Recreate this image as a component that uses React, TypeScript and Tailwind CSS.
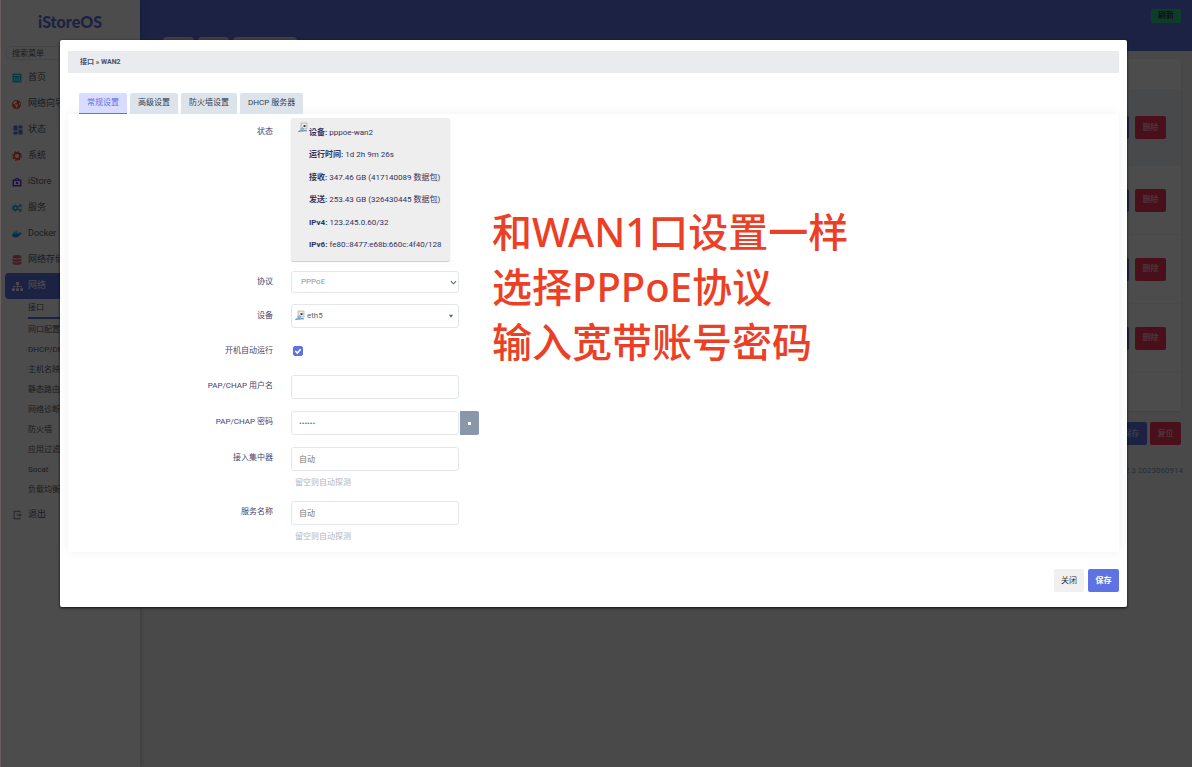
import clsx from "clsx";
import { useId, useState, type ReactNode } from "react";
import { FaCogs, FaDatabase, FaDocker, FaSitemap } from "react-icons/fa";
import { FaEarthAmericas } from "react-icons/fa6";
import { MdDashboard } from "react-icons/md";
import { RiLogoutBoxRLine } from "react-icons/ri";

const SUB_MENU = [
  "接口",
  "网口配置",
  "DHCP/DNS",
  "主机名映射",
  "静态路由",
  "网络诊断",
  "防火墙",
  "应用过滤",
  "Socat",
  "负载均衡",
];

const TABS = ["常规设置", "高级设置", "防火墙设置", "DHCP 服务器"];

const STATUS = [
  ["设备", "pppoe-wan2"],
  ["运行时间", "1d 2h 9m 26s"],
  ["接收", "347.46 GB (417140089 数据包)"],
  ["发送", "253.43 GB (326430445 数据包)"],
  ["IPv4", "123.245.0.60/32"],
  ["IPv6", "fe80::8477:e68b:660c:4f40/128"],
];

function ChartIcon() {
  return (
    <svg viewBox="0 0 20 20" className="size-[10px]" aria-hidden>
      <rect x="1" y="1" width="18" height="18" rx="1" fill="#11cdef" />
      <path
        d="M4 5h12M5.5 8v8M10 10v6M14.5 8v8"
        stroke="#fff"
        strokeWidth="1.6"
        fill="none"
      />
    </svg>
  );
}

function GearIcon() {
  return (
    <svg viewBox="0 0 20 20" className="size-[10px]" fill="none" aria-hidden>
      <circle cx="10" cy="10" r="6" stroke="#fb4b26" strokeWidth="3.6" />
      <circle
        cx="10"
        cy="10"
        r="8.6"
        stroke="#fb4b26"
        strokeWidth="2.4"
        strokeDasharray="3.6 3.15"
      />
    </svg>
  );
}

function BagIcon() {
  return (
    <svg viewBox="0 0 20 20" className="size-[10px]" fill="none" aria-hidden>
      <path d="M7 6V3h6v3" stroke="#6a3fe0" strokeWidth="2" />
      <rect x="2.5" y="6.5" width="15" height="11" stroke="#6a3fe0" strokeWidth="3" />
      <circle cx="10" cy="12" r="2.6" fill="#6a3fe0" />
    </svg>
  );
}

function EthernetIcon({ className }: { className?: string }) {
  return (
    <svg viewBox="0 0 20 22" className={clsx("h-[11px] w-[10px]", className)} aria-hidden>
      <path d="M6 2h12v12H6z" fill="#e9e6dc" stroke="#a9aaa6" strokeWidth="1.4" />
      <path d="M10 5h5v5h-5z" fill="#fff" />
      <path d="M11 6h4v4h-4z" fill="#3c3c3c" />
      <path d="M5 14l4-3 3 3-4 4z" fill="#9ab8d6" stroke="#6f94b8" />
      <path d="M1 20c3-4 6-1 9-2s4-1 8 0" fill="none" stroke="#4f8fcb" strokeWidth="2.4" />
    </svg>
  );
}

const MENU: { label: string; icon: ReactNode }[] = [
  { label: "首页", icon: <ChartIcon /> },
  { label: "网络向导", icon: <FaEarthAmericas className="size-[9px] text-[#fb4b26]" /> },
  { label: "状态", icon: <MdDashboard className="size-3 text-[#5e72e4]" /> },
  { label: "系统", icon: <GearIcon /> },
  { label: "iStore", icon: <BagIcon /> },
  { label: "服务", icon: <FaCogs className="size-[10px] text-[#11b5d8]" /> },
  { label: "Docker", icon: <FaDocker className="size-[10px] text-[#1a9be8]" /> },
  { label: "网络存储", icon: <FaDatabase className="size-[10px] text-[#e8607f]" /> },
  { label: "网络", icon: <FaSitemap className="size-[11px] text-white" /> },
];

function Sidebar() {
  return (
    <aside className="relative z-10 w-[140px] shrink-0 bg-white px-[5px] text-[#5c6070] shadow-[0_0_6px_rgba(0,0,0,0.25)]">
      <h1 className="pt-2 text-center font-['Lato','Noto_Sans_CJK_SC',sans-serif] text-[16px] leading-7 font-black text-[#5e72e4]">
        iStoreOS
      </h1>
      <input
        type="text"
        aria-label="搜索菜单"
        placeholder="搜索菜单"
        className="mt-[10px] block h-[14px] w-full rounded-full border border-gray-200 px-1.5 text-[8px] placeholder:text-[#5c6070]"
      />
      <nav className="mt-[5px] text-[9px]">
        {MENU.map((item) => (
          <a
            key={item.label}
            href="#"
            className={clsx(
              "flex h-[26px] items-center rounded pl-[7px]",
              item.label === "网络" && "bg-[#5e72e4] text-white",
            )}
          >
            <span className="flex w-4 items-center">{item.icon}</span>
            {item.label}
          </a>
        ))}
        <div className="pl-[23px] text-[8px]">
          {SUB_MENU.map((label, i) => (
            <a
              key={label}
              href="#"
              className={clsx(
                "flex h-5 items-center",
                i === 0 && "mr-5 mb-px border-b-2 border-[#5e72e4]",
              )}
            >
              {label}
            </a>
          ))}
        </div>
        <a href="#" className="mt-0.5 flex h-[26px] items-center pl-[7px]">
          <span className="flex w-4 items-center">
            <RiLogoutBoxRLine className="size-[10px] text-gray-500" />
          </span>
          退出
        </a>
      </nav>
    </aside>
  );
}

function ActionButton({ tone, children }: { tone: "red" | "blue"; children: ReactNode }) {
  return (
    <button
      type="button"
      className={clsx(
        "h-[23px] w-[31px] rounded-xs text-[8px] text-white/80",
        tone === "red" ? "bg-[#f5365c]" : "bg-[#5e72e4]",
      )}
    >
      {children}
    </button>
  );
}

function Background() {
  return (
    <div className="flex min-h-screen">
      <Sidebar />
      <div className="min-w-0 flex-1 bg-[#f4f5f7]">
        <header className="h-[51px] bg-[#5e72e4] pt-[9px] pr-[11px]">
          <button
            type="button"
            className="ml-auto block h-[14px] w-[30px] rounded-xs bg-[#2dce89] text-[8px] font-bold text-[#32325d]"
          >
            刷新
          </button>
          <div className="mt-3.5 flex gap-1 pl-[23px]">
            <span className="h-3.5 w-[31px] rounded-t bg-gray-300" />
            <span className="h-3.5 w-[31px] rounded-t bg-gray-300" />
            <span className="h-3.5 w-16 rounded-t bg-gray-300" />
          </div>
        </header>
        <main className="px-[11px] pt-2">
          <section className="rounded bg-white shadow-sm">
            <div className="h-[30px]" />
            <div className="flex h-[77px] items-center justify-end gap-1.5 bg-[#f2f6fa] pr-[15px]">
              <ActionButton tone="blue">编辑</ActionButton>
              <ActionButton tone="red">删除</ActionButton>
            </div>
            {[0, 1, 2].map((row) => (
              <div
                key={row}
                className="flex h-[69px] items-center justify-end gap-1.5 border-b border-gray-100 pr-[15px]"
              >
                <ActionButton tone="blue">编辑</ActionButton>
                <ActionButton tone="red">删除</ActionButton>
              </div>
            ))}
            <div className="h-[38px]" />
          </section>
          <div className="mt-[11px] flex justify-end gap-[3px]">
            <ActionButton tone="blue">保存</ActionButton>
            <ActionButton tone="red">复位</ActionButton>
          </div>
          <p className="mt-5 -mr-0.5 text-right text-[8px] leading-3 text-[#8898aa]">
            02.3 2023060914
          </p>
        </main>
      </div>
    </div>
  );
}

const FIELD =
  "block w-[168px] rounded-[3px] border border-[#e3e6ea] bg-white text-[8px] outline-none";

function Row({
  label,
  htmlFor,
  labelClass = "leading-6",
  className,
  children,
}: {
  label: string;
  htmlFor?: string;
  labelClass?: string;
  className?: string;
  children: ReactNode;
}) {
  return (
    <div className={clsx("flex items-start gap-[18px]", className)}>
      <label htmlFor={htmlFor} className={clsx("w-[205px] shrink-0 text-right", labelClass)}>
        {label}
      </label>
      <div>{children}</div>
    </div>
  );
}

function InterfaceForm() {
  const id = useId();
  const [autostart, setAutostart] = useState(true);

  return (
    <form className="pt-1 pb-[7px] text-[8px] text-[#45456b]">
      <Row label="状态" labelClass="leading-7">
        <div className="flex h-[143px] w-[159px] gap-px rounded-xs bg-[#eee] pt-1 pb-[5px] pl-[7px] text-[#32325d] shadow-[0_1px_1px_rgba(0,0,0,0.2)]">
          <EthernetIcon className="shrink-0" />
          <dl className="flex flex-col justify-between whitespace-nowrap">
            {STATUS.map(([name, value]) => (
              <div key={name} className="flex gap-0.5 leading-[22px]">
                <dt className="font-bold">{name}:</dt>
                <dd>{value}</dd>
              </div>
            ))}
          </dl>
        </div>
      </Row>

      <Row label="协议" htmlFor={`${id}-proto`} labelClass="leading-[22px]" className="mt-[10px]">
        <div className="relative">
          <select
            id={`${id}-proto`}
            className={clsx(FIELD, "h-[22px] appearance-none pl-[9px] text-[#8898aa]")}
          >
            <option>PPPoE</option>
          </select>
          <svg
            viewBox="0 0 8 8"
            className="pointer-events-none absolute top-2 right-0.5 size-[7px]"
            fill="none"
            aria-hidden
          >
            <path d="M1 2.5l3 3 3-3" stroke="#525f7f" strokeWidth="1.2" />
          </svg>
        </div>
      </Row>

      <Row label="设备" htmlFor={`${id}-device`} className="mt-[11px]">
        <div className="relative">
          <EthernetIcon className="absolute top-1.5 left-1" />
          <select
            id={`${id}-device`}
            className={clsx(FIELD, "h-6 appearance-none pl-[15px] text-[#5f6670]")}
          >
            <option>eth5</option>
          </select>
          <svg
            viewBox="0 0 6 6"
            className="pointer-events-none absolute top-[10px] right-1.5 size-1"
            aria-hidden
          >
            <path d="M0 1h6L3 5.5z" fill="#525f7f" />
          </svg>
        </div>
      </Row>

      <Row label="开机自动运行" htmlFor={`${id}-auto`} className="mt-[11px]">
        <div className="relative mt-[7px] ml-0.5 size-[10px]">
          <input
            id={`${id}-auto`}
            type="checkbox"
            checked={autostart}
            onChange={(e) => setAutostart(e.target.checked)}
            className="block size-[10px] appearance-none rounded-xs border border-[#5e72e4] checked:bg-[#5e72e4]"
          />
          {autostart ? (
            <svg
              viewBox="0 0 10 10"
              className="pointer-events-none absolute inset-0"
              fill="none"
              aria-hidden
            >
              <path d="M2.3 5l2 2 3.4-3.8" stroke="#fff" strokeWidth="1.6" />
            </svg>
          ) : null}
        </div>
      </Row>

      <Row
        label="PAP/CHAP 用户名"
        htmlFor={`${id}-user`}
        labelClass="leading-[22px]"
        className="mt-3"
      >
        <input id={`${id}-user`} type="text" className={clsx(FIELD, "h-6 px-[7px]")} />
      </Row>

      <Row
        label="PAP/CHAP 密码"
        htmlFor={`${id}-pass`}
        labelClass="leading-[22px]"
        className="mt-3"
      >
        <div className="flex gap-px">
          <input
            id={`${id}-pass`}
            type="password"
            defaultValue="123456"
            className={clsx(FIELD, "h-6 px-[7px] text-[#5f6f88]")}
          />
          <button
            type="button"
            aria-label="显示密码"
            className="flex h-6 w-[19px] items-center justify-center rounded-r-xs bg-[#8898aa]"
          >
            <span className="size-[3px] bg-white" />
          </button>
        </div>
      </Row>

      <Row
        label="接入集中器"
        htmlFor={`${id}-ac`}
        labelClass="leading-[22px]"
        className="mt-3"
      >
        <input
          id={`${id}-ac`}
          type="text"
          placeholder="自动"
          className={clsx(FIELD, "h-6 px-[7px] placeholder:text-[#777]")}
        />
        <p className="pt-1 pl-1 leading-4 text-[#b3b3c2]">留空则自动探测</p>
      </Row>

      <Row
        label="服务名称"
        htmlFor={`${id}-service`}
        labelClass="leading-[22px]"
        className="mt-[10px]"
      >
        <input
          id={`${id}-service`}
          type="text"
          placeholder="自动"
          className={clsx(FIELD, "h-6 px-[7px] placeholder:text-[#777]")}
        />
        <p className="pt-1 pl-1 leading-4 text-[#b3b3c2]">留空则自动探测</p>
      </Row>
    </form>
  );
}

function InterfaceModal() {
  const [tab, setTab] = useState(TABS[0]);

  return (
    <div
      role="dialog"
      aria-modal="true"
      aria-label="接口 » WAN2"
      className="relative rounded-xs bg-white px-2 pt-[11px] pb-[15px] shadow-[0_1px_3px_rgba(0,0,0,0.8)]"
    >
      <h4 className="bg-[#e9ebee] pl-3 text-[7px] leading-[22px] font-bold text-[#45506b]">
        接口 » WAN2
      </h4>

      <div role="tablist" className="mt-5 flex gap-[3px] pl-[11px] text-[8px]">
        {TABS.map((name) => (
          <button
            key={name}
            type="button"
            role="tab"
            aria-selected={tab === name}
            onClick={() => setTab(name)}
            className={clsx(
              "h-[21px] rounded-t-xs border-b px-2",
              tab === name
                ? "border-[#5e72e4] bg-[#d8dcff] text-[#5e72e4]"
                : "border-transparent bg-[#dde3ea] text-[#333c4e]",
            )}
          >
            {name}
          </button>
        ))}
      </div>

      <div className="rounded-xs bg-white shadow-[0_0_10px_rgba(136,152,170,0.15)]">
        <InterfaceForm />
      </div>

      <div className="mt-[17px] flex justify-end gap-1 text-[8px]">
        <button type="button" className="h-[23px] w-[30px] rounded-xs bg-[#f0f0f0] text-[#32323d]">
          关闭
        </button>
        <button
          type="button"
          className="h-[23px] w-[31px] rounded-xs bg-[#5e72e4] font-bold text-white"
        >
          保存
        </button>
      </div>

      <div className="pointer-events-none absolute top-[164px] left-[432px] font-['Noto_Sans','Noto_Sans_CJK_SC',sans-serif] text-[40px] leading-[55px] font-medium whitespace-nowrap text-[#ec4026]">
        <p>和WAN1口设置一样</p>
        <p>选择PPPoE协议</p>
        <p>输入宽带账号密码</p>
      </div>
    </div>
  );
}

export default function App() {
  return (
    <div className="relative min-h-screen overflow-hidden font-['Roboto','Noto_Sans_CJK_SC',sans-serif]">
      <Background />
      <div className="absolute inset-0 z-20 border-l border-[#6b6060] bg-black/70 pt-10 pr-[65px] pl-[59px]">
        <InterfaceModal />
      </div>
    </div>
  );
}
